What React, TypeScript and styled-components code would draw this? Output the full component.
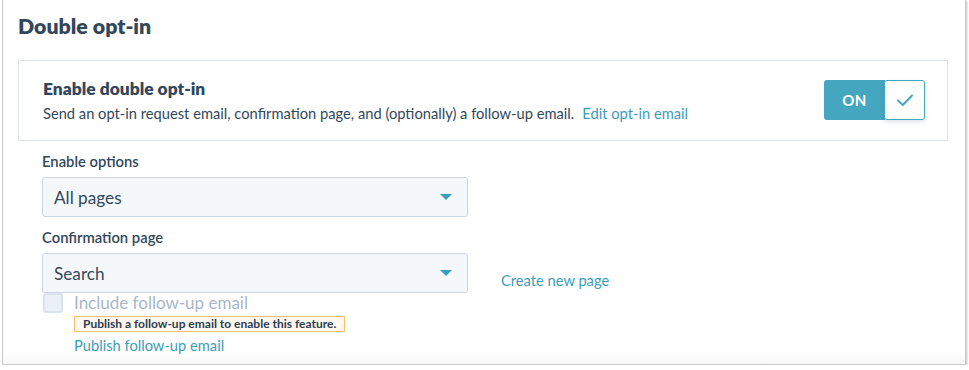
import React from 'react';
import styled, { createGlobalStyle } from 'styled-components';

const textColor = '#33475b';
const linkColor = '#3d9db8';
const borderColor = '#dfe3eb';

const GlobalStyle = createGlobalStyle`
    html, body {
        margin: 0;
        padding: 0;
        background: #ffffff;
    }
    body {
        font-family: Lato, "Noto Sans", sans-serif;
        color: ${textColor};
    }
`;

const Frame = styled.div`
    width: 964px;
    height: 365px;
    margin-left: 2px;
    border: 1px solid #c9c9c9;
    border-top: none;
    box-shadow: 1px 1px 2px rgba(0, 0, 0, 0.25);
    background: linear-gradient(to bottom, #ffffff 0, #ffffff 352px, #f6f6f6 365px);
    box-sizing: border-box;
    padding: 13px 16px 0 15px;
`;

const Title = styled.h2`
    margin: 0;
    font-size: 21.3px;
    font-weight: 800;
    line-height: 27px;
`;

const Card = styled.div`
    margin-top: 20px;
    width: 930px;
    height: 81px;
    box-sizing: border-box;
    border: 1px solid ${borderColor};
    display: flex;
    align-items: center;
    justify-content: space-between;
    padding: 0 22px 0 24px;
`;

const CardTitle = styled.div`
    font-size: 17.4px;
    font-weight: 800;
    line-height: 22px;
`;

const CardText = styled.div`
    margin-top: 3px;
    font-size: 14.7px;
    line-height: 20px;
`;

const Link = styled.a`
    color: ${linkColor};
    text-decoration: none;
    cursor: pointer;
    font-size: 14.7px;
`;

const InlineLink = styled(Link)`
    margin-left: 8px;
`;

const Toggle = styled.div`
    display: flex;
    height: 40px;
    margin-top: -1px;
`;

const ToggleOn = styled.div`
    width: 61px;
    background: #45a6bf;
    color: #ffffff;
    border-radius: 3px 0 0 3px;
    display: flex;
    align-items: center;
    justify-content: center;
    font-size: 15px;
    font-weight: 700;
    letter-spacing: 0.5px;
`;

const ToggleKnob = styled.div`
    width: 41px;
    box-sizing: border-box;
    border: 1px solid #45a6bf;
    border-radius: 3px;
    margin-left: -1px;
    background: #ffffff;
    display: flex;
    align-items: center;
    justify-content: center;
    box-shadow: 0 2px 4px rgba(45, 62, 80, 0.15);
`;

const Form = styled.div`
    padding-left: 24px;
    padding-top: 10px;
    display: flex;
    flex-direction: column;
`;

const Label = styled.label`
    font-size: 14.8px;
    font-weight: 600;
    line-height: 20px;
`;

const FieldRow = styled.div`
    display: flex;
    align-items: center;
    margin-top: 6px;
`;

const Select = styled.div`
    width: 426px;
    height: 40px;
    box-sizing: border-box;
    background: #f5f8fa;
    border: 1px solid #cbd6e2;
    border-radius: 3px;
    display: flex;
    align-items: center;
    justify-content: space-between;
    padding: 0 15px 0 11px;
    font-size: 17.2px;
`;

const Caret = styled.span`
    width: 0;
    height: 0;
    border-left: 6px solid transparent;
    border-right: 6px solid transparent;
    border-top: 6px solid #3d9db8;
`;

const SecondLabel = styled(Label)`
    margin-top: 10px;
`;

const SideLink = styled(Link)`
    margin-left: 33px;
    margin-top: 14px;
`;

const CheckRow = styled.div`
    display: flex;
    align-items: flex-start;
    gap: 11px;
    padding-left: 1px;
`;

const Checkbox = styled.span`
    width: 20px;
    height: 20px;
    box-sizing: border-box;
    border: 2px solid #dbe3ec;
    border-radius: 3px;
    background: #eaf0f6;
    flex-shrink: 0;
`;

const CheckBody = styled.div`
    display: flex;
    flex-direction: column;
    align-items: flex-start;
`;

const CheckLabel = styled.span`
    font-size: 17px;
    line-height: 20px;
    color: #a8b8c9;
`;

const Warning = styled.span`
    margin-top: 3px;
    border: 1px solid #f5c26b;
    background: #fef8f0;
    font-size: 12px;
    font-weight: 700;
    line-height: 14px;
    padding: 0 8px;
    color: #2d3e50;
`;

const BottomLink = styled(Link)`
    margin-top: 4px;
    line-height: 18px;
`;

const Check = () => (
    <svg width="18" height="14" viewBox="0 0 18 14" fill="none">
        <path d="M2 7.5 L6.8 12 L16 2.5" stroke="#45a6bf" strokeWidth="2" strokeLinecap="round" strokeLinejoin="round" />
    </svg>
);

const App = () => {
    return (
        <>
            <GlobalStyle />
            <Frame>
                <Title>Double opt-in</Title>
                <Card>
                    <div>
                        <CardTitle>Enable double opt-in</CardTitle>
                        <CardText>
                            Send an opt-in request email, confirmation page, and (optionally) a follow-up email.
                            <InlineLink>Edit opt-in email</InlineLink>
                        </CardText>
                    </div>
                    <Toggle>
                        <ToggleOn>ON</ToggleOn>
                        <ToggleKnob><Check /></ToggleKnob>
                    </Toggle>
                </Card>
                <Form>
                    <Label>Enable options</Label>
                    <FieldRow>
                        <Select>
                            All pages
                            <Caret />
                        </Select>
                    </FieldRow>
                    <SecondLabel>Confirmation page</SecondLabel>
                    <FieldRow>
                        <Select>
                            Search
                            <Caret />
                        </Select>
                        <SideLink>Create new page</SideLink>
                    </FieldRow>
                    <CheckRow>
                        <Checkbox />
                        <CheckBody>
                            <CheckLabel>Include follow-up email</CheckLabel>
                            <Warning>Publish a follow-up email to enable this feature.</Warning>
                            <BottomLink>Publish follow-up email</BottomLink>
                        </CheckBody>
                    </CheckRow>
                </Form>
            </Frame>
        </>
    );
};

export default App;
